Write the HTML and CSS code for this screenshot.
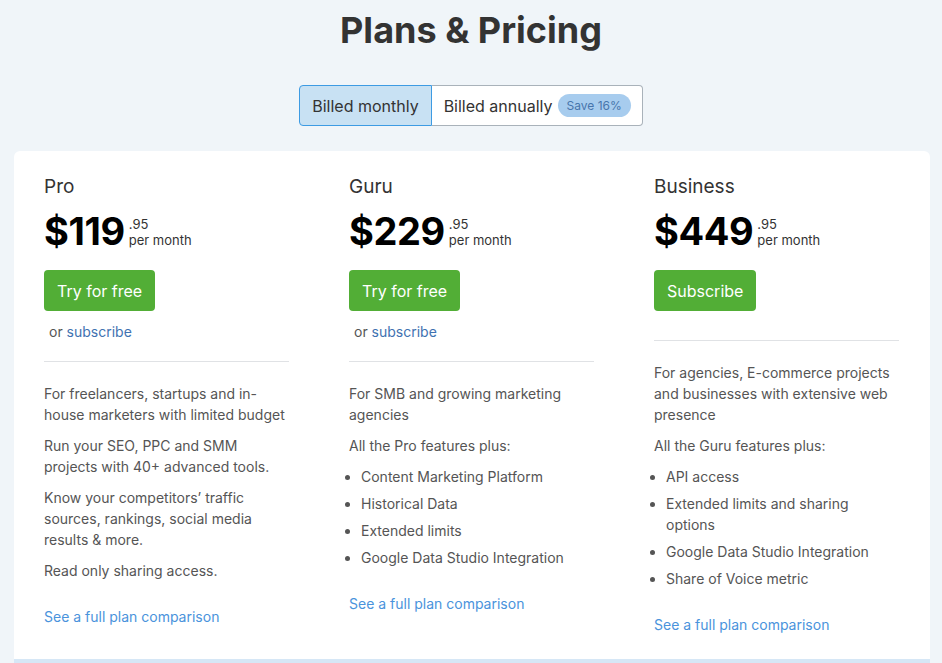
FILE: index.html
```html
<!DOCTYPE html>
<html lang="en">
<head>
    <meta charset="UTF-8">
    <meta name="viewport" content="width=device-width, initial-scale=1.0">
    <title>Plans &amp; Pricing</title>
    <link rel="stylesheet" href="styles.css">
</head>
<body>

    <div class="page-head">
        <h1>Plans &amp; Pricing</h1>
        <div class="billing-toggle">
            <button class="toggle-btn active">Billed monthly</button>
            <button class="toggle-btn">Billed annually <span class="save-badge">Save 16%</span></button>
        </div>
    </div>

    <div class="plans-card">
        <!-- Pro -->
        <div class="plan">
            <div class="plan-name">Pro</div>
            <div class="price">
                <span class="price-main">$119</span>
                <span class="price-side"><span>.95</span><span>per month</span></span>
            </div>
            <button class="plan-btn">Try for free</button>
            <p class="alt-link">or <a href="#">subscribe</a></p>
            <hr class="divider">
            <div class="plan-body">
                <p>For freelancers, startups and in-house marketers with limited budget</p>
                <p>Run your SEO, PPC and SMM projects with 40+ advanced tools.</p>
                <p>Know your competitors’ traffic sources, rankings, social media results &amp; more.</p>
                <p>Read only sharing access.</p>
            </div>
            <a class="compare-link" href="#">See a full plan comparison</a>
        </div>

        <!-- Guru -->
        <div class="plan">
            <div class="plan-name">Guru</div>
            <div class="price">
                <span class="price-main">$229</span>
                <span class="price-side"><span>.95</span><span>per month</span></span>
            </div>
            <button class="plan-btn">Try for free</button>
            <p class="alt-link">or <a href="#">subscribe</a></p>
            <hr class="divider">
            <div class="plan-body">
                <p>For SMB and growing marketing agencies</p>
                <p>All the Pro features plus:</p>
                <ul>
                    <li>Content Marketing Platform</li>
                    <li>Historical Data</li>
                    <li>Extended limits</li>
                    <li>Google Data Studio Integration</li>
                </ul>
            </div>
            <a class="compare-link" href="#">See a full plan comparison</a>
        </div>

        <!-- Business -->
        <div class="plan">
            <div class="plan-name">Business</div>
            <div class="price">
                <span class="price-main">$449</span>
                <span class="price-side"><span>.95</span><span>per month</span></span>
            </div>
            <button class="plan-btn">Subscribe</button>
            <hr class="divider no-alt">
            <div class="plan-body">
                <p>For agencies, E-commerce projects and businesses with extensive web presence</p>
                <p>All the Guru features plus:</p>
                <ul>
                    <li>API access</li>
                    <li>Extended limits and sharing options</li>
                    <li>Google Data Studio Integration</li>
                    <li>Share of Voice metric</li>
                </ul>
            </div>
            <a class="compare-link" href="#">See a full plan comparison</a>
        </div>
    </div>

    <div class="next-strip"></div>

</body>
</html>
```

FILE: styles.css
```css
body {
    margin: 0;
    padding: 0;
    background-color: #f0f5f9;
    font-family: Inter, "Noto Sans", Arial, sans-serif;
    color: #555;
}

.page-head {
    text-align: center;
    padding-top: 8px;
}

.page-head h1 {
    margin: 0;
    font-size: 36px;
    line-height: 44px;
    font-weight: 700;
    color: #333;
}

.billing-toggle {
    display: inline-flex;
    margin-top: 33px;
}

.toggle-btn {
    display: flex;
    align-items: center;
    height: 41px;
    padding: 0 11px 0 12px;
    font-family: inherit;
    font-size: 16px;
    color: #333;
    background-color: #fff;
    border: 1px solid #a9b2ba;
    border-left: none;
    border-radius: 0 4px 4px 0;
    cursor: pointer;
}

.toggle-btn.active {
    padding: 0 12px;
    background-color: #c8e1f3;
    border: 1px solid #3d9be3;
    border-radius: 4px 0 0 4px;
}

.save-badge {
    display: inline-block;
    margin-left: 5px;
    padding: 0 9px;
    height: 23px;
    line-height: 23px;
    font-size: 12px;
    color: #4775ac;
    background-color: #a7ccee;
    border-radius: 12px;
}

.plans-card {
    display: grid;
    grid-template-columns: repeat(3, 245px);
    column-gap: 60px;
    margin: 25px 12px 0 14px;
    padding: 24px 30px 24px 30px;
    background-color: #fff;
    border-radius: 6px 6px 0 0;
}

.plan {
    display: flex;
    flex-direction: column;
    align-items: flex-start;
}

.plan-name {
    font-size: 19px;
    line-height: 24px;
    color: #333;
}

.price {
    display: flex;
    align-items: flex-end;
    margin-top: 12px;
}

.price-main {
    font-size: 38px;
    line-height: 40px;
    font-weight: 700;
    color: #000;
    letter-spacing: -0.4px;
}

.price-side {
    display: flex;
    flex-direction: column;
    margin-left: 4px;
    margin-bottom: 3px;
    font-size: 13px;
    line-height: 16px;
    color: #333;
}

.plan-btn {
    margin-top: 19px;
    height: 41px;
    padding: 0 13px;
    font-family: inherit;
    font-size: 16px;
    color: #fff;
    background-color: #52ae36;
    border: none;
    border-radius: 4px;
    cursor: pointer;
}

.alt-link {
    margin: 10px 0 0 0;
    padding-left: 5px;
    font-size: 14px;
    line-height: 21px;
}

.alt-link a {
    color: #3f72b1;
    text-decoration: none;
}

.divider {
    width: 100%;
    margin: 19px 0 0 0;
    border: none;
    border-top: 1px solid #e0e2e5;
}

.divider.no-alt {
    margin-top: 29px;
}

.plan-body {
    margin-top: 21px;
    font-size: 14px;
    line-height: 21px;
}

.plan-body p {
    margin: 0 0 10px 0;
}

.plan-body p:last-child {
    margin-bottom: 0;
}

.plan-body ul {
    margin: 0;
    padding-left: 12px;
}

.plan-body li {
    margin-bottom: 6px;
}

.plan-body li:last-child {
    margin-bottom: 0;
}

.compare-link {
    margin-top: 25px;
    font-size: 14px;
    line-height: 21px;
    color: #4a93dc;
    text-decoration: none;
}

.next-strip {
    height: 10px;
    margin: 0 12px 0 14px;
    background-color: #d6e7f6;
}
```
